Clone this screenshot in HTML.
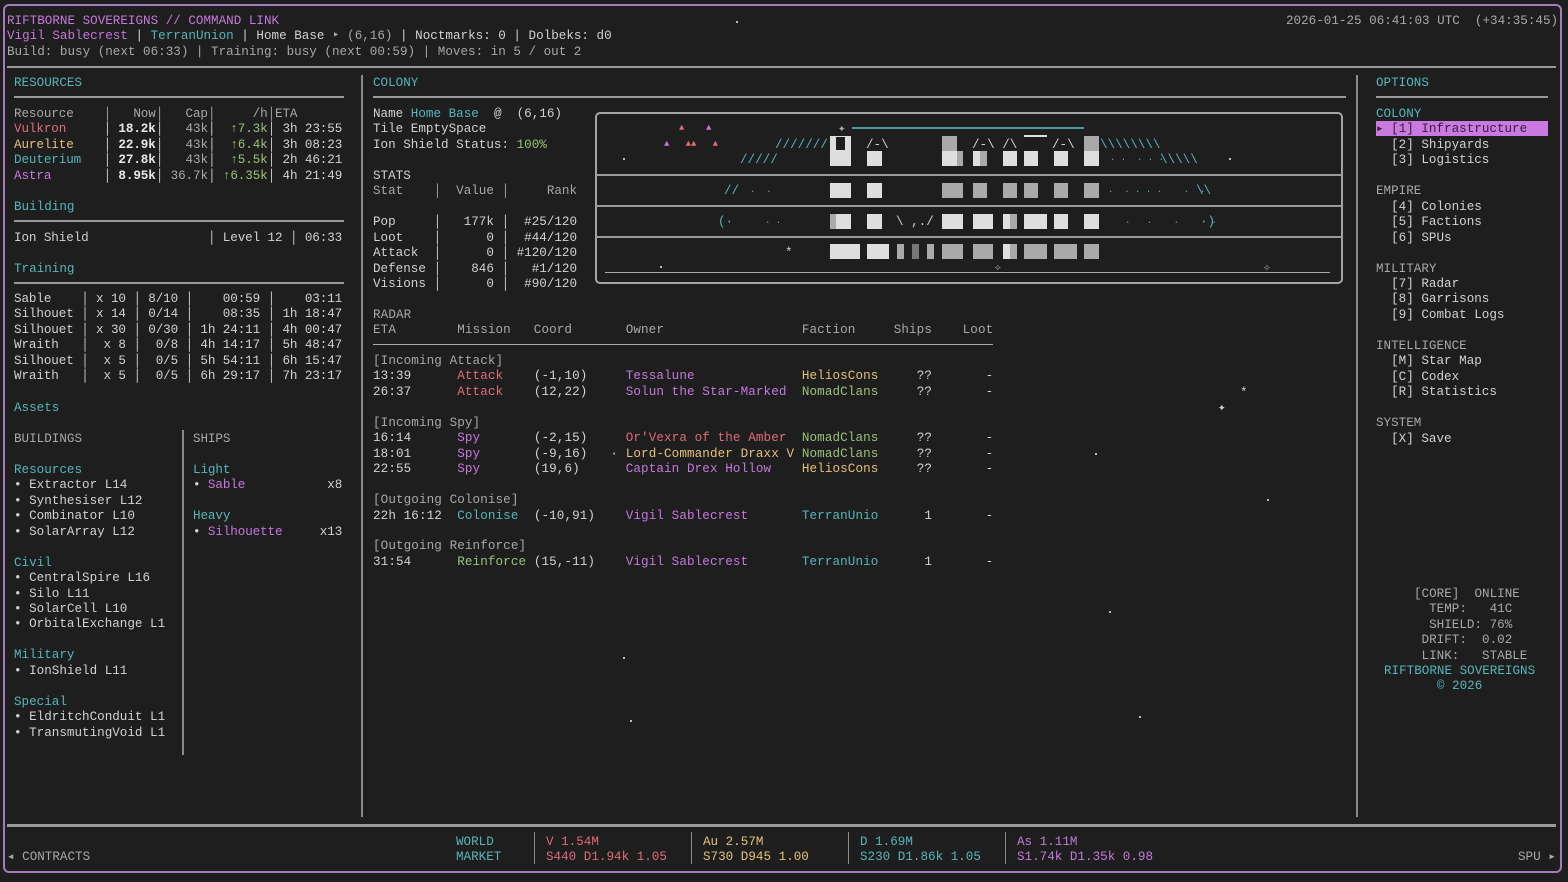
<!DOCTYPE html>
<html><head><meta charset="utf-8"><style>
*{margin:0;padding:0;box-sizing:border-box}
body{width:1568px;height:882px;background:#1e1e1e;overflow:hidden;position:relative;font-family:"Liberation Mono","DejaVu Sans Mono",monospace;font-size:12.6px;line-height:15.45px;color:#d2d2d2}
.t{position:absolute;white-space:pre;margin-top:2px}
.c{color:#56b6bd}.p{color:#c678dd}.r{color:#e06c75}.y{color:#e5c07b}.g{color:#98c379}.m{color:#a8a8a8}.w{color:#e8e8e8;font-weight:bold}
.hl{position:absolute;height:2px;background:#9a9a9a}
.vl{position:absolute;width:2px;background:#8a8a8a}
.b{position:absolute;background:#dedede}
.s{position:absolute;background:#a9a9a9}
.d{position:absolute;width:2px;height:2px;background:#bbb}
.rd{letter-spacing:0.1px}
.lp{letter-spacing:-0.1px}
</style></head><body>
<div style="position:absolute;left:3px;top:4px;width:1559px;height:869px;border:2px solid #a77bbb;border-radius:6px"></div>

<div class="t p" style="left:7px;top:12px">RIFTBORNE SOVEREIGNS // COMMAND LINK</div>
<div class="t" style="left:7px;top:27px"><span class="p">Vigil Sablecrest</span> | <span class="c">TerranUnion</span> | Home Base <span class="m">‣ (6,16)</span> | Noctmarks: 0 | Dolbeks: d0</div>
<div class="t m" style="left:7px;top:43px">Build: busy (next 06:33) | Training: busy (next 00:59) | Moves: in 5 / out 2</div>
<div class="t m" style="left:1286px;top:12px">2026-01-25 06:41:03 UTC  (+34:35:45)</div>
<div class="hl" style="left:7px;top:66px;width:1549px"></div>

<div class="vl" style="left:361px;top:75px;height:742px"></div>
<div class="vl" style="left:1356px;top:75px;height:742px"></div>

<!-- LEFT -->
<div class="t c" style="left:14px;top:74px">RESOURCES</div>
<div class="hl" style="left:14px;top:96px;width:330px"></div>
<div class="t lp" style="left:14px;top:105px"><span class="m">Resource    │   Now│   Cap│     /h│ETA</span>
<span class="r">Vulkron</span>     │<span class="w"> 18.2k</span>│<span class="m">   43k</span>│<span class="g">  ↑7.3k</span>│ 3h 23:55
<span class="y">Aurelite</span>    │<span class="w"> 22.9k</span>│<span class="m">   43k</span>│<span class="g">  ↑6.4k</span>│ 3h 08:23
<span class="c">Deuterium</span>   │<span class="w"> 27.8k</span>│<span class="m">   43k</span>│<span class="g">  ↑5.5k</span>│ 2h 46:21
<span class="p">Astra</span>       │<span class="w"> 8.95k</span>│<span class="m"> 36.7k</span>│<span class="g"> ↑6.35k</span>│ 4h 21:49</div>

<div class="t c" style="left:14px;top:198px">Building</div>
<div class="hl" style="left:14px;top:220px;width:330px"></div>
<div class="t lp" style="left:14px;top:229px">Ion Shield                │ Level 12 │ 06:33</div>
<div class="t c" style="left:14px;top:260px">Training</div>
<div class="hl" style="left:14px;top:282px;width:330px"></div>
<div class="t lp" style="left:14px;top:290px">Sable    │ x 10 │ 8/10 │    00:59 │    03:11
Silhouet │ x 14 │ 0/14 │    08:35 │ 1h 18:47
Silhouet │ x 30 │ 0/30 │ 1h 24:11 │ 4h 00:47
Wraith   │  x 8 │  0/8 │ 4h 14:17 │ 5h 48:47
Silhouet │  x 5 │  0/5 │ 5h 54:11 │ 6h 15:47
Wraith   │  x 5 │  0/5 │ 6h 29:17 │ 7h 23:17</div>
<div class="t c" style="left:14px;top:399px">Assets</div>
<div class="vl" style="left:182px;top:430px;height:325px"></div>
<div class="t" style="left:14px;top:430px"><span class="m">BUILDINGS</span>

<span class="c">Resources</span>
• Extractor L14
• Synthesiser L12
• Combinator L10
• SolarArray L12

<span class="c">Civil</span>
• CentralSpire L16
• Silo L11
• SolarCell L10
• OrbitalExchange L1

<span class="c">Military</span>
• IonShield L11

<span class="c">Special</span>
• EldritchConduit L1
• TransmutingVoid L1</div>
<div class="t lp" style="left:193px;top:430px"><span class="m">SHIPS</span>

<span class="c">Light</span>
• <span class="p">Sable</span>           x8

<span class="c">Heavy</span>
• <span class="p">Silhouette</span>     x13</div>

<!-- COLONY -->
<div class="t c" style="left:373px;top:74px">COLONY</div>
<div class="hl" style="left:373px;top:96px;width:973px"></div>
<div class="t" style="left:373px;top:105px">Name <span class="c">Home Base</span>  @  (6,16)
Tile EmptySpace
Ion Shield Status: <span class="g">100%</span>

STATS
<span class="m">Stat    │  Value │     Rank</span>

Pop     │   177k │  #25/120
Loot    │      0 │  #44/120
Attack  │      0 │ #120/120
Defense │    846 │   #1/120
Visions │      0 │  #90/120</div>

<!-- art -->
<div style="position:absolute;left:595px;top:112px;width:748px;height:172px;border:2px solid #a5a5a5;border-radius:5px"></div>
<div class="hl" style="left:596px;top:174px;width:746px"></div>
<div class="hl" style="left:596px;top:205px;width:746px"></div>
<div class="hl" style="left:596px;top:236px;width:746px"></div>
<div class="t" style="left:679px;top:119px;font-size:9px"><span class="r">▲</span>    <span class="p">▲</span></div>
<div class="t" style="left:664px;top:135px;font-size:9px"><span class="p">▲</span>   <span class="r">▲▲</span>   <span class="r">▲</span></div>
<div class="t m" style="left:838px;top:120px">✦</div>
<div style="position:absolute;left:852px;top:127px;width:232px;height:2px;background:#4a9ea3"></div>
<div class="t c" style="left:775px;top:136px">///////</div>
<div class="t c" style="left:740px;top:151px">/////</div>
<div class="t c" style="left:1100px;top:136px">\\\\\\\\</div>
<div class="t c" style="left:1160px;top:151px">\\\\\</div>
<div class="t c" style="left:724px;top:182px">//</div>
<div class="t c" style="left:1196px;top:182px">\\</div>
<div class="t c" style="left:718px;top:213px">(·</div>
<div class="t c" style="left:1200px;top:213px">·)</div>
<div class="t c" style="left:1110px;top:151px;font-size:9px">· ·  · · ·</div>
<div class="t c" style="left:1108px;top:183px;font-size:9px">·  · · · ·    ·  ·</div>
<div class="t c" style="left:750px;top:183px;font-size:9px">·  ·</div>
<div class="t c" style="left:1125px;top:214px;font-size:9px">·   ·    ·      ·</div>
<div class="t c" style="left:765px;top:214px;font-size:9px">· ·</div>
<div class="t" style="left:866px;top:136px">/-\</div>
<div class="t" style="left:972px;top:136px">/-\ /\</div>
<div class="t" style="left:1052px;top:136px">/-\</div>
<div class="b" style="left:1024px;top:135px;width:23px;height:2px"></div>
<div class="b" style="left:830px;top:136px;width:21px;height:30px"></div>
<div style="position:absolute;left:836px;top:137px;width:9px;height:13px;background:#1e1e1e"></div>
<div class="b" style="left:867px;top:151px;width:15px;height:15px"></div>
<div class="s" style="left:942px;top:136px;width:15px;height:15px"></div>
<div class="b" style="left:942px;top:151px;width:15px;height:15px"></div>
<div class="s" style="left:957px;top:151px;width:6px;height:15px"></div>
<div class="b" style="left:973px;top:151px;width:7px;height:15px"></div>
<div class="s" style="left:980px;top:151px;width:7px;height:15px"></div>
<div class="b" style="left:1003px;top:151px;width:14px;height:15px"></div>
<div class="b" style="left:1024px;top:151px;width:14px;height:15px"></div>
<div class="b" style="left:1054px;top:151px;width:14px;height:15px"></div>
<div class="s" style="left:1084px;top:136px;width:15px;height:15px"></div>
<div class="b" style="left:1084px;top:151px;width:15px;height:15px"></div>
<!-- row2 -->
<div class="b" style="left:830px;top:183px;width:21px;height:15px"></div>
<div class="b" style="left:867px;top:183px;width:15px;height:15px"></div>
<div class="s" style="left:942px;top:183px;width:21px;height:15px"></div>
<div class="s" style="left:973px;top:183px;width:14px;height:15px"></div>
<div class="s" style="left:1003px;top:183px;width:14px;height:15px"></div>
<div class="s" style="left:1024px;top:183px;width:14px;height:15px"></div>
<div class="s" style="left:1054px;top:183px;width:14px;height:15px"></div>
<div class="s" style="left:1084px;top:183px;width:15px;height:15px"></div>
<!-- row3 -->
<div class="s" style="left:830px;top:214px;width:6px;height:15px"></div>
<div class="b" style="left:836px;top:214px;width:15px;height:15px"></div>
<div class="b" style="left:867px;top:214px;width:15px;height:15px"></div>
<div class="t" style="left:896px;top:213px">\ ,./</div>
<div class="b" style="left:942px;top:214px;width:21px;height:15px"></div>
<div class="b" style="left:973px;top:214px;width:20px;height:15px"></div>
<div class="b" style="left:1003px;top:214px;width:7px;height:15px"></div>
<div class="s" style="left:1010px;top:214px;width:7px;height:15px"></div>
<div class="b" style="left:1024px;top:214px;width:23px;height:15px"></div>
<div class="b" style="left:1054px;top:214px;width:14px;height:15px"></div>
<div class="b" style="left:1084px;top:214px;width:15px;height:15px"></div>
<!-- row4 -->
<div class="t" style="left:785px;top:244px">*</div>
<div class="b" style="left:830px;top:244px;width:30px;height:15px"></div>
<div class="b" style="left:867px;top:244px;width:22px;height:15px"></div>
<div class="s" style="left:897px;top:244px;width:7px;height:15px"></div>
<div class="s" style="left:912px;top:244px;width:7px;height:15px;background:#777"></div>
<div class="s" style="left:927px;top:244px;width:7px;height:15px"></div>
<div class="s" style="left:942px;top:244px;width:21px;height:15px"></div>
<div class="s" style="left:973px;top:244px;width:20px;height:15px"></div>
<div class="b" style="left:1003px;top:244px;width:7px;height:15px"></div>
<div class="s" style="left:1010px;top:244px;width:7px;height:15px"></div>
<div class="s" style="left:1024px;top:244px;width:23px;height:15px"></div>
<div class="s" style="left:1054px;top:244px;width:23px;height:15px"></div>
<div class="s" style="left:1084px;top:244px;width:15px;height:15px"></div>
<div class="hl" style="left:605px;top:272px;width:725px;height:1px;background:#aaa"></div>
<div class="t m" style="left:994px;top:259px">✧</div>
<div class="t m" style="left:1263px;top:259px">✧</div>
<div class="d" style="left:623px;top:158px"></div>
<div class="d" style="left:1229px;top:158px"></div>
<div class="d" style="left:660px;top:266px"></div>

<!-- RADAR -->
<div class="t rd" style="left:373px;top:306px"><span class="m">RADAR
ETA        Mission   Coord       Owner                  Faction     Ships    Loot</span></div>
<div class="hl" style="left:373px;top:344px;width:620px;height:1px;background:#aaa"></div>
<div class="t rd" style="left:373px;top:352px"><span class="m">[Incoming Attack]</span>
13:39      <span class="r">Attack</span>    (-1,10)     <span class="p">Tessalune</span>              <span class="y">HeliosCons</span>     ??       -
26:37      <span class="r">Attack</span>    (12,22)     <span class="p">Solun the Star-Marked</span>  <span class="g">NomadClans</span>     ??       -

<span class="m">[Incoming Spy]</span>
16:14      <span class="p">Spy</span>       (-2,15)     <span class="r">Or'Vexra of the Amber</span>  <span class="g">NomadClans</span>     ??       -
18:01      <span class="p">Spy</span>       (-9,16)   · <span class="y">Lord-Commander Draxx V</span> <span class="g">NomadClans</span>     ??       -
22:55      <span class="p">Spy</span>       (19,6)      <span class="p">Captain Drex Hollow</span>    <span class="y">HeliosCons</span>     ??       -

<span class="m">[Outgoing Colonise]</span>
22h 16:12  <span class="c">Colonise</span>  (-10,91)    <span class="p">Vigil Sablecrest</span>       <span class="c">TerranUnio</span>      1       -

<span class="m">[Outgoing Reinforce]</span>
31:54      <span class="g">Reinforce</span> (15,-11)    <span class="p">Vigil Sablecrest</span>       <span class="c">TerranUnio</span>      1       -</div>

<div class="d" style="left:736px;top:21px"></div>
<div class="d" style="left:1095px;top:453px"></div>
<div class="d" style="left:1267px;top:499px"></div>
<div class="d" style="left:1109px;top:611px"></div>
<div class="d" style="left:623px;top:657px"></div>
<div class="d" style="left:630px;top:720px"></div>
<div class="d" style="left:1139px;top:716px"></div>
<div class="t" style="left:1240px;top:384px">*</div>
<div class="t" style="left:1218px;top:399px">✦</div>

<!-- OPTIONS -->
<div class="t c" style="left:1376px;top:74px">OPTIONS</div>
<div class="hl" style="left:1376px;top:96px;width:172px"></div>
<div style="position:absolute;left:1376px;top:121px;width:172px;height:15px;background:#c97ade"></div>
<div class="t" style="left:1376px;top:105px"><span class="c">COLONY</span>
<span style="color:#3a1a44">▸ [1] Infrastructure</span>
  [2] Shipyards
  [3] Logistics

<span class="m">EMPIRE</span>
  [4] Colonies
  [5] Factions
  [6] SPUs

<span class="m">MILITARY</span>
  [7] Radar
  [8] Garrisons
  [9] Combat Logs

<span class="m">INTELLIGENCE</span>
  [M] Star Map
  [C] Codex
  [R] Statistics

<span class="m">SYSTEM</span>
  [X] Save</div>
<div class="t m" style="left:1414px;top:585px">[CORE]  ONLINE
  TEMP:   41C
  SHIELD: 76%
 DRIFT:  0.02
 LINK:   STABLE</div>
<div class="t c" style="left:1384px;top:662px">RIFTBORNE SOVEREIGNS
       © 2026</div>

<!-- footer -->
<div class="hl" style="left:7px;top:824px;width:1549px;height:3px"></div>
<div class="t m" style="left:7px;top:848px">◂ CONTRACTS</div>
<div class="t c" style="left:456px;top:833px">WORLD
MARKET</div>
<div class="vl" style="left:534px;top:832px;height:32px;width:1px"></div>
<div class="vl" style="left:691px;top:832px;height:32px;width:1px"></div>
<div class="vl" style="left:848px;top:832px;height:32px;width:1px"></div>
<div class="vl" style="left:1005px;top:832px;height:32px;width:1px"></div>
<div class="t r" style="left:546px;top:833px">V 1.54M
S440 D1.94k 1.05</div>
<div class="t y" style="left:703px;top:833px">Au 2.57M
S730 D945 1.00</div>
<div class="t c" style="left:860px;top:833px">D 1.69M
S230 D1.86k 1.05</div>
<div class="t p" style="left:1017px;top:833px">As 1.11M
S1.74k D1.35k 0.98</div>
<div class="t m" style="left:1518px;top:848px">SPU ▸</div>
</body></html>
